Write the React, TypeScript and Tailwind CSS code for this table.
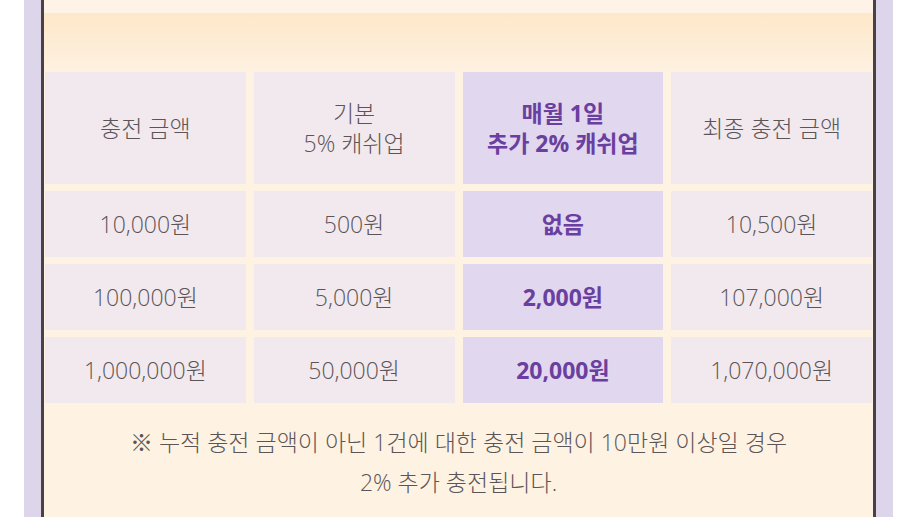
import React from 'react';

type Row = { amount: string; base: string; bonus: string; total: string };

const rows: Row[] = [
  { amount: '10,000원', base: '500원', bonus: '없음', total: '10,500원' },
  { amount: '100,000원', base: '5,000원', bonus: '2,000원', total: '107,000원' },
  { amount: '1,000,000원', base: '50,000원', bonus: '20,000원', total: '1,070,000원' },
];

const cell = 'flex items-center justify-center bg-[#f2e9ee] text-[#5b5558] text-[23px] leading-[30px] text-center font-light';
const hiCell = 'flex items-center justify-center bg-[#e1d8ef] text-[#6b3fa0] font-bold text-[23px] leading-[30px] text-center';

const App: React.FC = () => {
  return (
    <div
      className="w-[915px] h-[517px] overflow-hidden bg-white pl-[24px] pr-[22px]"
      style={{ fontFamily: '"Open Sans", "Noto Sans CJK KR", sans-serif' }}
    >
      <div className="h-full bg-[#ddd6ea] px-[17px]">
        <div className="h-full border-x-[3px] border-[#4a4047] bg-[#fef2e2] flex flex-col">
          {/* top band */}
          <div className="h-[13px] bg-[#fef3e6]" />
          <div className="h-[59px] bg-gradient-to-b from-[#fde8c9] to-[#fef1e1]" />

          {/* cashup table */}
          <div className="grid grid-cols-4 gap-x-[8px] gap-y-[7px] px-px">
            <div className={`${cell} h-[112px]`}>충전 금액</div>
            <div className={`${cell} h-[112px]`}>
              기본
              <br />
              5% 캐쉬업
            </div>
            <div className={`${hiCell} h-[112px]`}>
              매월 1일
              <br />
              추가 2% 캐쉬업
            </div>
            <div className={`${cell} h-[112px]`}>최종 충전 금액</div>

            {rows.map((r) => (
              <React.Fragment key={r.amount}>
                <div className={`${cell} h-[66px]`}>{r.amount}</div>
                <div className={`${cell} h-[66px]`}>{r.base}</div>
                <div className={`${hiCell} h-[66px]`}>{r.bonus}</div>
                <div className={`${cell} h-[66px]`}>{r.total}</div>
              </React.Fragment>
            ))}
          </div>

          {/* footnote */}
          <p className="pt-[19px] text-center text-[23px] leading-[40px] font-light text-[#5b5558]">
            ※ 누적 충전 금액이 아닌 1건에 대한 충전 금액이 10만원 이상일 경우
            <br />
            2% 추가 충전됩니다.
          </p>
        </div>
      </div>
    </div>
  );
};

export default App;
